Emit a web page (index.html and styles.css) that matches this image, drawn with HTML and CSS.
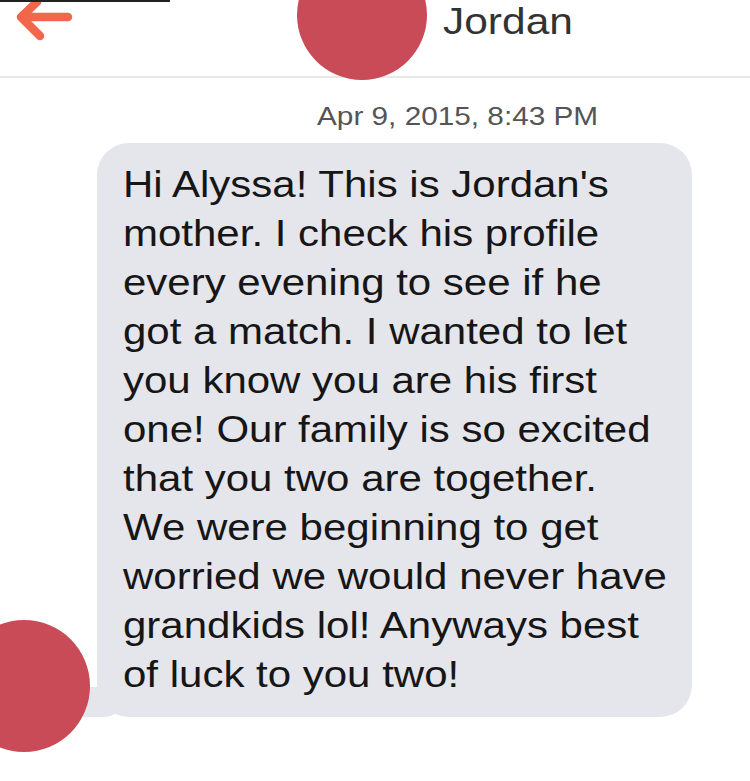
FILE: index.html
```html
<!DOCTYPE html>
<html>
<head>
<meta charset="utf-8">
<link rel="stylesheet" href="styles.css">
</head>
<body>
<div class="screen">
  <header class="header">
    <div class="topline"></div>
    <svg class="back" width="80" height="48" viewBox="0 0 80 48">
      <path d="M68 17 H22 M37 2 L21 17 L40 36" fill="none" stroke="#f0674b" stroke-width="8.5" stroke-linecap="round" stroke-linejoin="round"/>
    </svg>
    <div class="avatar"></div>
    <div class="name">Jordan</div>
  </header>
  <div class="time">Apr 9, 2015, 8:43 PM</div>
  <div class="row">
    <div class="avatar-small"></div>
    <div class="bubble"><div class="msg">Hi Alyssa! This is Jordan's<br>mother. I check his profile<br>every evening to see if he<br>got a match. I wanted to let<br>you know you are his first<br>one! Our family is so excited<br>that you two are together.<br>We were beginning to get<br>worried we would never have<br>grandkids lol! Anyways best<br>of luck to you two!</div></div>
  </div>
</div>
</body>
</html>
```
FILE: styles.css
```css
html, body {
  margin: 0;
  padding: 0;
  background: #fff;
}
.screen {
  width: 750px;
  height: 781px;
  position: relative;
  overflow: hidden;
  font-family: "Liberation Sans", Arial, sans-serif;
}
.header {
  position: relative;
  height: 76px;
  border-bottom: 2px solid #e8e8e8;
}
.topline {
  position: absolute;
  left: 0;
  top: 0;
  width: 170px;
  height: 2px;
  background: #222;
  z-index: 2;
}
.back {
  position: absolute;
  left: 0;
  top: 0;
}
.avatar {
  position: absolute;
  left: 297px;
  top: -50px;
  width: 130px;
  height: 130px;
  border-radius: 50%;
  background: #c94b58;
}
.name {
  position: absolute;
  left: 443px;
  top: 1px;
  font-size: 36px;
  color: #333;
  transform: scaleX(1.18);
  transform-origin: left center;
}
.time {
  margin-top: 23px;
  padding-left: 317px;
  font-size: 25px;
  color: #555;
  line-height: 30px;
  transform: scaleX(1.19);
  transform-origin: 317px center;
}
.row {
  position: relative;
  margin-top: 12px;
  padding-left: 97px;
}
.avatar-small {
  position: absolute;
  left: -42px;
  top: 477px;
  width: 132px;
  height: 132px;
  border-radius: 50%;
  background: #c94b58;
  z-index: 2;
}
.bubble {
  position: relative;
  width: 595px;
  box-sizing: border-box;
  background: #e5e5ec;
  border-radius: 32px;
  padding: 17px 10px 18px 26px;
}
.msg {
  font-size: 37.5px;
  line-height: 49px;
  color: #161616;
  white-space: nowrap;
  transform: scaleX(1.12);
  transform-origin: left center;
}
.bubble::before {
  content: "";
  position: absolute;
  left: -14px;
  bottom: 0;
  width: 40px;
  height: 30px;
  background: #e5e5ec;
  border-bottom-right-radius: 20px 16px;
}
```
